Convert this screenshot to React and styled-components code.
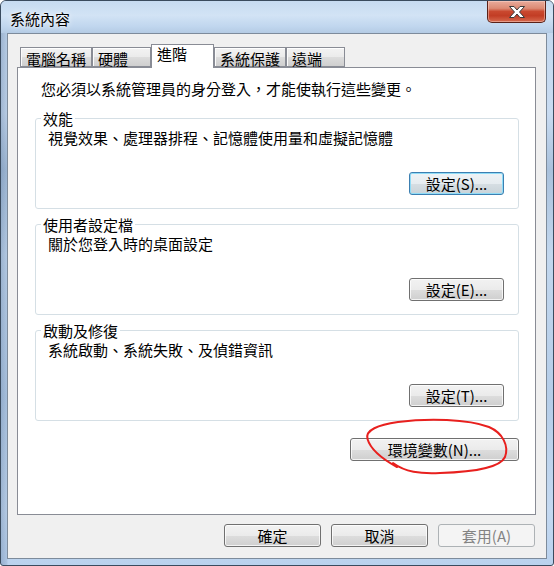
import React from 'react';
import styled, { createGlobalStyle } from 'styled-components';

const FONT = `"Noto Sans CJK TC", "Noto Sans CJK SC", "Noto Sans", sans-serif`;

const Global = createGlobalStyle`
  html, body { margin: 0; padding: 0; background: #ffffff; }
  body { font-family: ${FONT}; }
`;

const Window = styled.div`
  position: relative;
  box-sizing: border-box;
  width: 554px;
  height: 566px;
  display: flex;
  flex-direction: column;
  border: 1px solid #3a4b5e;
  border-radius: 6px 6px 3px 3px;
  overflow: hidden;
  font-family: ${FONT};
  background:
    linear-gradient(90deg, rgba(60, 90, 130, 0.28) 0, rgba(60, 90, 130, 0.12) 6px, rgba(255, 255, 255, 0) 7px),
    linear-gradient(180deg, #c3d8ef 0%, #c8dbf1 20%, #a9c1dc 30%, #c2d7ee 45%, #b5cde8 70%, #c4d9f1 90%, #bad2ee 100%);
`;

const TitleBar = styled.div`
  height: 32px;
  flex: none;
  display: flex;
  justify-content: space-between;
  align-items: flex-start;
  padding: 0 7px 0 9px;
  background: linear-gradient(180deg, #c6dbf1 0%, #d2e3f5 45%, #c0d6ee 80%, #b4cbe4 100%);
`;

const Title = styled.div`
  margin-top: 9px;
  font-size: 15px;
  line-height: 17px;
  color: #000;
  text-shadow: 0 0 6px rgba(255, 255, 255, 0.95), 0 0 2px rgba(255, 255, 255, 0.9);
`;

const CloseButton = styled.div`
  box-sizing: border-box;
  width: 59px;
  height: 22px;
  display: flex;
  align-items: center;
  justify-content: center;
  border: 1px solid #5a2118;
  border-top: none;
  border-radius: 0 0 5px 5px;
  background: linear-gradient(180deg, #e9ab9c 0%, #dc8a74 35%, #c9482f 50%, #c23d25 70%, #d66a4f 100%);
  box-shadow: inset 0 0 0 1px rgba(255, 220, 210, 0.45);
`;

const Client = styled.div`
  flex: 1;
  box-sizing: border-box;
  margin: 0 6px 6px;
  padding: 10px 10px 11px 9px;
  display: flex;
  flex-direction: column;
  background: #f0f0f0;
  border: 1px solid #7d8b9b;
`;

const TabStrip = styled.div`
  display: flex;
  align-items: flex-end;
  height: 23px;
  padding-left: 3px;
`;

const Tab = styled.div`
  box-sizing: border-box;
  position: relative;
  z-index: ${p => (p.$active ? 1 : 0)};
  min-width: ${p => (p.$active ? 63 : 59)}px;
  height: ${p => (p.$active ? 24 : 20)}px;
  margin-bottom: ${p => (p.$active ? -1 : 0)}px;
  padding: ${p => (p.$active ? 0 : 2)}px 5px 0;
  font-size: 15px;
  line-height: 17px;
  color: #000;
  white-space: nowrap;
  border: 1px solid #898c95;
  border-bottom: ${p => (p.$active ? 'none' : '1px solid #898c95')};
  background: ${p =>
    p.$active ? '#ffffff' : 'linear-gradient(180deg, #f3f3f3 0%, #ebebeb 50%, #dddddd 51%, #cfcfcf 100%)'};
  box-shadow: ${p => (p.$active ? 'none' : 'inset 0 1px 0 #ffffff, inset 1px 0 0 #fbfbfb')};
`;

const Panel = styled.div`
  box-sizing: border-box;
  display: flex;
  flex-direction: column;
  padding: 12px 16px 53px 17px;
  background: #ffffff;
  border: 1px solid #898c95;
`;

const Intro = styled.div`
  margin: 0 0 13px 6px;
  font-size: 15px;
  line-height: 17px;
  color: #000;
`;

const Group = styled.fieldset`
  margin: ${p => (p.$first ? 0 : 7)}px 0 0;
  padding: 2px 14px 13px 12px;
  border: 1px solid #d5dfe5;
  border-radius: 3px;
  min-width: 0;
`;

const Legend = styled.legend`
  margin-left: -7px;
  padding: 0 2px;
  font-size: 15px;
  line-height: 17px;
  color: #000;
`;

const Desc = styled.div`
  font-size: 15px;
  line-height: 17px;
  color: #000;
`;

const ButtonRow = styled.div`
  display: flex;
  justify-content: flex-end;
  gap: ${p => p.$gap || 0}px;
  margin-top: ${p => p.$top || 0}px;
  margin-right: ${p => p.$right || 0}px;
`;

const Button = styled.button`
  box-sizing: border-box;
  width: ${p => p.$w}px;
  height: 23px;
  padding: 0;
  font-family: ${FONT};
  font-size: 15px;
  line-height: 17px;
  color: #000;
  border: 1px solid #707070;
  border-radius: 3px;
  background: linear-gradient(180deg, #f2f2f2 0%, #ebebeb 50%, #dddddd 51%, #cfcfcf 100%);
  box-shadow: inset 0 0 0 1px rgba(255, 255, 255, 0.75);

  &[data-default='true'] {
    border-color: #3c7fb1;
    box-shadow: inset 0 0 0 1px #8fdcf7;
    background: linear-gradient(180deg, #eef3f6 0%, #e6ecf0 50%, #d6dee3 51%, #c9d3d9 100%);
  }

  &:disabled {
    color: #838383;
    border-color: #adb2b5;
    background: #f4f4f4;
    box-shadow: none;
  }
`;

const Scribble = styled.svg`
  position: absolute;
  left: -1px;
  top: -1px;
  pointer-events: none;
`;

const groups = [
  { title: '效能', desc: '視覺效果、處理器排程、記憶體使用量和虛擬記憶體', button: '設定(S)...', def: true },
  { title: '使用者設定檔', desc: '關於您登入時的桌面設定', button: '設定(E)...' },
  { title: '啟動及修復', desc: '系統啟動、系統失敗、及偵錯資訊', button: '設定(T)...' },
];

const tabs = ['電腦名稱', '硬體', '進階', '系統保護', '遠端'];

export default function App() {
  return (
    <>
      <Global />
      <Window>
        <TitleBar>
          <Title>系統內容</Title>
          <CloseButton>
            <svg width="18" height="14" viewBox="0 0 18 14">
              <path
                d="M1.5 1.5 H6 L9 5 L12 1.5 H16.5 L11.5 7 L16.5 12.5 H12 L9 9 L6 12.5 H1.5 L6.5 7 Z"
                fill="#ffffff"
                stroke="#3a3a3a"
                strokeWidth="1"
                strokeLinejoin="round"
              />
            </svg>
          </CloseButton>
        </TitleBar>
        <Client>
          <TabStrip>
            {tabs.map(t => (
              <Tab key={t} $active={t === '進階'}>
                {t}
              </Tab>
            ))}
          </TabStrip>
          <Panel>
            <Intro>您必須以系統管理員的身分登入，才能使執行這些變更。</Intro>
            {groups.map((g, i) => (
              <Group key={g.title} $first={i === 0}>
                <Legend>{g.title}</Legend>
                <Desc>{g.desc}</Desc>
                <ButtonRow $top={26}>
                  <Button $w={95} data-default={g.def ? 'true' : 'false'}>
                    {g.button}
                  </Button>
                </ButtonRow>
              </Group>
            ))}
            <ButtonRow $top={17}>
              <Button $w={169}>環境變數(N)...</Button>
            </ButtonRow>
          </Panel>
          <ButtonRow $top={9} $gap={10} $right={1}>
            <Button $w={97}>確定</Button>
            <Button $w={97}>取消</Button>
            <Button $w={97} disabled>
              套用(A)
            </Button>
          </ButtonRow>
        </Client>
        <Scribble width="554" height="566" viewBox="0 0 554 566">
          <path
            d="M397 467 C386 461 371 451 367.5 439 C365 430 378 425 398 422 C428 418 468 419 489 427 C503 433 509 446 505 457 C500 468 472 472 440 473 C420 474 405 472 393 463"
            fill="none"
            stroke="#e8201e"
            strokeWidth="2"
            strokeLinecap="round"
          />
        </Scribble>
      </Window>
    </>
  );
}
